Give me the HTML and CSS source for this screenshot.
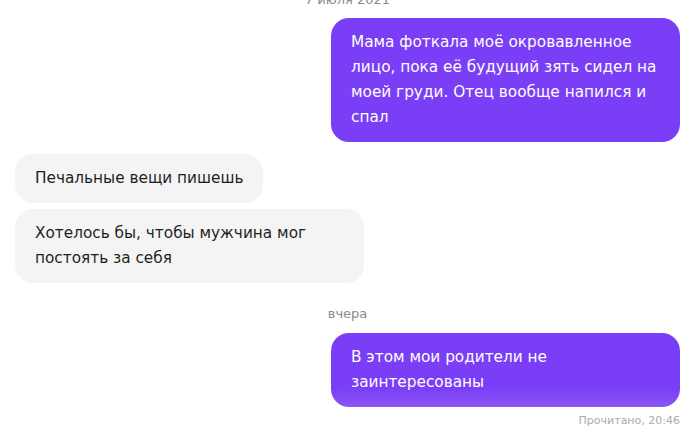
FILE: index.html
```html
<!DOCTYPE html>
<html lang="ru">
<head>
<meta charset="utf-8">
<link rel="stylesheet" href="styles.css">
</head>
<body>
<div class="chat">
  <div class="date date-top">7 июля 2021</div>
  <div class="msg out">Мама фоткала моё окровавленное лицо, пока её будущий зять сидел на моей груди. Отец вообще напился и спал</div>
  <div class="group in-group">
    <div class="msg in">Печальные вещи пишешь</div>
    <div class="msg in">Хотелось бы, чтобы мужчина мог постоять за себя</div>
  </div>
  <div class="date">вчера</div>
  <div class="msg out last">В этом мои родители не заинтересованы</div>
  <div class="status">Прочитано, 20:46</div>
</div>
</body>
</html>
```
FILE: styles.css
```css
html, body {
  margin: 0;
  padding: 0;
  background: #fff;
}
body {
  font-family: "DejaVu Sans", sans-serif;
  font-size: 15.3px;
  color: #1f1f1f;
  overflow: hidden;
  height: 441px;
}
.chat {
  display: flex;
  flex-direction: column;
  padding: 0 11px 0 15px;
  margin-top: -9px;
}
.date {
  align-self: center;
  font-size: 13px;
  color: #8a8a8a;
  line-height: 18px;
}
.date-top {
  margin-bottom: 9px;
}
.msg {
  max-width: 309px;
  padding: 12px 20px;
  line-height: 25px;
  border-radius: 18px;
}
.out {
  align-self: flex-end;
  background: #7a3ef6;
  color: #fff;
}
.out.last {
  background: linear-gradient(to bottom, #7a3ef6 0%, #7a3ef6 75%, #8b57f6 100%);
}
.in {
  align-self: flex-start;
  background: #f4f4f4;
}
.in-group {
  display: flex;
  flex-direction: column;
  gap: 6px;
  margin-top: 12px;
}
.date:not(.date-top) {
  margin-top: 22px;
  margin-bottom: 10px;
}
.status {
  align-self: flex-end;
  font-size: 11px;
  color: #ababab;
  margin-top: 6px;
  line-height: 15px;
}
```
